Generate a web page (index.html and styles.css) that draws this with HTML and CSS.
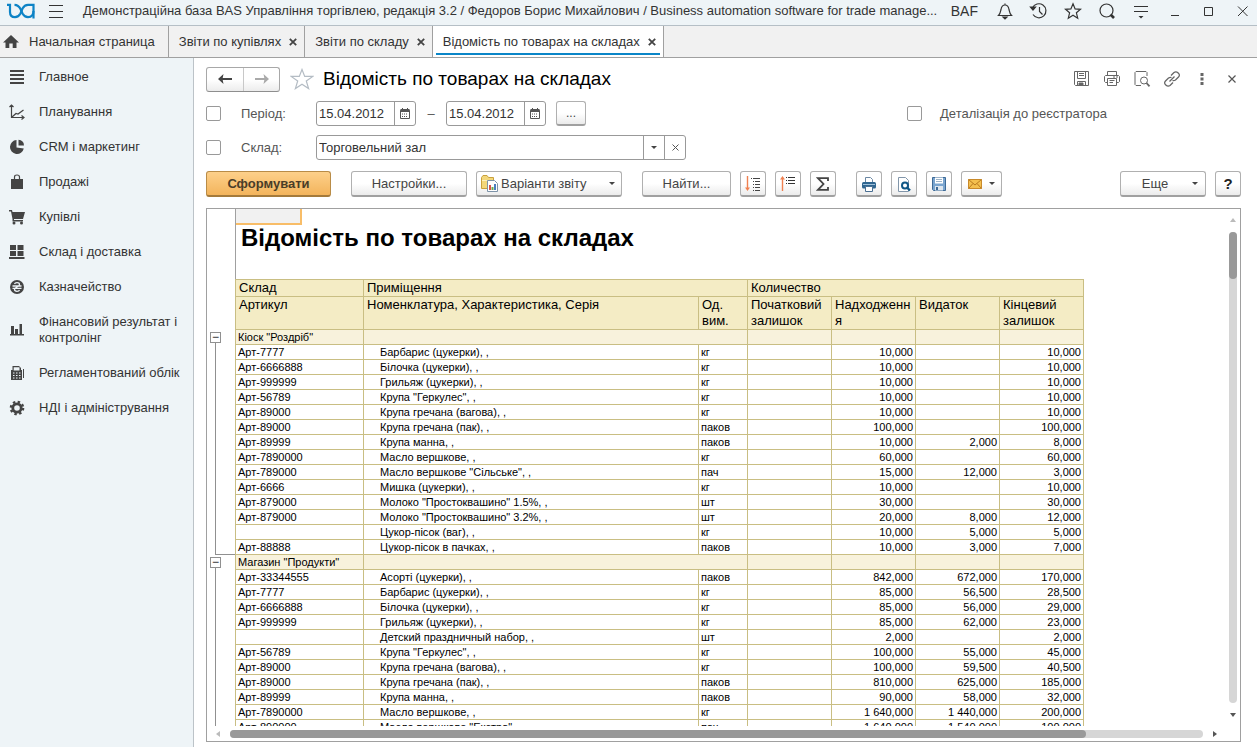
FILE: index.html
```html
<!DOCTYPE html>
<html lang="uk">
<head>
<meta charset="utf-8">
<title>Відомість по товарах на складах</title>
<link rel="stylesheet" href="styles.css">
</head>
<body>
<div class="app">
  <header class="topbar">
    <svg class="logo" width="28" height="16" viewBox="0 0 28 16" fill="none" stroke="#0d83c6" stroke-width="2.200"><path d="M0 1.800H3V9Q3 14.200 8 14.200Q11.500 14.200 13.500 10.500L15.500 5.500Q17.500 1.800 21 1.800H26.500V15.500"/><path d="M7.500 1.800Q11.500 1.800 13.500 6L15.500 10.500Q17.500 14.200 21 14.200Q26.500 14.200 26.500 8"/></svg>
    <button class="icon-btn menu" aria-label="Меню"><svg width="16" height="16" viewBox="0 0 16 16" stroke="#333" fill="none"><path d="M1 2.500H15M1 8.500H15M1 14.500H15"/></svg></button>
    <div class="app-title">Демонстраційна база BAS Управління торгівлею, редакція 3.2 / Федоров Борис Михайлович / Business automation software for trade manage...</div>
    <span class="baf">BAF</span>
    <nav class="top-icons">
      <button class="icon-btn" aria-label="Сповіщення"><svg width="20" height="20" viewBox="0 0 20 20" stroke="#333" stroke-width="1.200" fill="none"><path d="M10 2.500V4M3.500 14.500H16.500C14.500 12.500 14.500 10.500 14 8.500C13.500 5.500 12 4 10 4S6.500 5.500 6 8.500C5.500 10.500 5.500 12.500 3.500 14.500Z"/><path d="M8 16H12L10 18Z" fill="#333"/></svg></button>
      <button class="icon-btn" aria-label="Історія"><svg width="20" height="20" viewBox="0 0 20 20" stroke="#333" stroke-width="1.200" fill="none"><path d="M3.500 7A7 7 0 1 1 4 13.500M10.500 6V10.500L13.500 13.500"/><path d="M1.500 6L4 9L6.500 6Z" fill="#333"/></svg></button>
      <button class="icon-btn" aria-label="Обране"><svg width="20" height="20" viewBox="0 0 20 20" stroke="#333" stroke-width="1.200" fill="none"><path d="M10 2.800L12.100 7.900L17.500 8.300L13.400 11.800L14.700 17.200L10 14.300L5.300 17.200L6.600 11.800L2.500 8.300L7.900 7.900Z"/></svg></button>
      <button class="icon-btn" aria-label="Пошук"><svg width="20" height="20" viewBox="0 0 20 20" stroke="#333" stroke-width="1.200" fill="none"><circle cx="9.500" cy="9.500" r="6.500"/><path d="M13.500 13.500L17 17" stroke-width="2.600"/></svg></button>
      <button class="icon-btn" aria-label="Налаштування"><svg width="20" height="20" viewBox="0 0 20 20" stroke="#333" stroke-width="1.200" fill="none"><path d="M3 5.500H17M3 10.500H17"/><path d="M7.500 15H12.500L10 17.500Z" fill="#333" stroke="none"/></svg></button>
      <button class="icon-btn" aria-label="Згорнути"><svg width="20" height="20" viewBox="0 0 20 20" stroke="#333" fill="none"><path d="M6 14.500H14"/></svg></button>
      <button class="icon-btn" aria-label="Розгорнути"><svg width="20" height="20" viewBox="0 0 20 20" stroke="#333" fill="none"><path d="M5.500 6.500H13.500V14.500H5.500Z"/></svg></button>
      <button class="icon-btn" aria-label="Закрити"><svg width="20" height="20" viewBox="0 0 20 20" stroke="#333" fill="none"><path d="M5 5.500L14.500 15M14.500 5.500L5 15"/></svg></button>
    </nav>
  </header>

  <nav class="tabs">
    <button class="tab home"><svg width="16" height="14" viewBox="0 0 16 14" fill="#444"><path d="M8 0L16 7.500H13.500V13H9.700V8.500H6.300V13H2.500V7.500H0Z"/></svg>Начальная страница</button>
    <button class="tab">Звіти по купівлях<svg class="tab-x" width="8" height="8" viewBox="0 0 8 8"><path d="M.8.8L7.200 7.200M7.200.8L.8 7.200"/></svg></button>
    <button class="tab">Звіти по складу<svg class="tab-x" width="8" height="8" viewBox="0 0 8 8"><path d="M.8.8L7.200 7.200M7.200.8L.8 7.200"/></svg></button>
    <button class="tab active">Відомість по товарах на складах<svg class="tab-x" width="8" height="8" viewBox="0 0 8 8"><path d="M.8.8L7.200 7.200M7.200.8L.8 7.200"/></svg></button>
  </nav>

  <div class="body">
    <aside class="sidebar">
      <a class="side-item" href="#"><svg width="16" height="16" viewBox="0 0 16 16" stroke="#444" stroke-width="2"><path d="M1 2H15M1 6H15M1 10H15M1 14H15"/></svg><span>Главное</span></a>
      <a class="side-item" href="#"><svg width="16" height="16" viewBox="0 0 16 16" stroke="#444" stroke-width="1.200" fill="none"><path d="M2.500 1V13.500H15M.5 3L2.500 1L4.500 3M12.500 11.500L15 13.500L12.500 15.500M3 13L7 9.500L9 10L14.500 6"/></svg><span>Планування</span></a>
      <a class="side-item" href="#"><svg width="16" height="16" viewBox="0 0 16 16" fill="#444"><path d="M7.500 1A7 7 0 1 0 14.800 9.500L7.500 8.500Z"/><path d="M9.500.8V6.500H15A6 6 0 0 0 9.500.8Z"/></svg><span>CRM і маркетинг</span></a>
      <a class="side-item" href="#"><svg width="16" height="16" viewBox="0 0 16 16" fill="#444"><path d="M2 5H14V15H2Z"/><path d="M5.500 7V3Q5.500 1 8 1T10.500 3V7" fill="none" stroke="#444" stroke-width="1.200"/></svg><span>Продажі</span></a>
      <a class="side-item" href="#"><svg width="16" height="16" viewBox="0 0 16 16" fill="#444"><path d="M0 1H3L3.500 3H16L14 10H5V11H14V12.500H3.500V10L2 2.500H0Z"/><circle cx="5" cy="14" r="1.500"/><circle cx="12.500" cy="14" r="1.500"/></svg><span>Купівлі</span></a>
      <a class="side-item" href="#"><svg width="16" height="16" viewBox="0 0 16 16" fill="#444"><path d="M1 1H7V6H1ZM8.500 1H14.500V6H8.500ZM1 7H7V12H1ZM8.500 7H14.500V12H8.500ZM0 13H15.500V15H0Z"/></svg><span>Склад і доставка</span></a>
      <a class="side-item" href="#"><svg width="16" height="16" viewBox="0 0 16 16" fill="none" stroke="#eef4f7" stroke-width="1.300"><circle cx="8" cy="8" r="7" fill="#444" stroke="none"/><path d="M5.500 5Q6 3.700 8 3.700Q10.500 3.700 10.500 5.500Q10.500 7 8 8Q5.500 9 5.500 10.500Q5.500 12.300 8 12.300Q10 12.300 10.500 11M3.500 7H12.500M3.500 9.300H12.500"/></svg><span>Казначейство</span></a>
      <a class="side-item" href="#"><svg width="16" height="16" viewBox="0 0 16 16" fill="#444"><path d="M2 4H5V12H2ZM6 7H9V12H6ZM10.500 2H13V12H10.500ZM1 12H15V13.500H1Z"/></svg><span>Фінансовий результат і контролінг</span></a>
      <a class="side-item" href="#"><svg width="16" height="16" viewBox="0 0 16 16" fill="#444"><path d="M3.500 1H10L12 3V5H13V15H2V5H3.500ZM4.700 2.200V5.500H10.500V2.200Z" fill-rule="evenodd"/><path d="M14 4H15V13H14Z"/><path d="M4 8H11.500M4 10.500H11.500M4 13H11.500" stroke="#eef4f7" stroke-width="1.200" stroke-dasharray="1.500 1.500"/></svg><span>Регламентований облік</span></a>
      <a class="side-item" href="#"><svg width="16" height="16" viewBox="0 0 16 16" fill="none" stroke="#444"><circle cx="8" cy="8" r="4.200" stroke-width="2.800"/><circle cx="8" cy="8" r="6.200" stroke-width="2.200" stroke-dasharray="2.430 2.430"/></svg><span>НДІ і адміністрування</span></a>
    </aside>

    <main class="content">
      <div class="head-row">
        <div class="nav-pair">
          <button class="nav-btn" aria-label="Назад"><svg width="14" height="10" viewBox="0 0 14 10" fill="#444"><path d="M0 5L5.500 0L4.700 4H14V6H4.700L5.500 10Z"/></svg></button>
          <button class="nav-btn" aria-label="Вперед"><svg width="14" height="10" viewBox="0 0 14 10" fill="#aaa"><path d="M14 5L8.500 0L9.300 4H0V6H9.300L8.500 10Z"/></svg></button>
        </div>
        <button class="icon-btn fav" aria-label="До обраного"><svg width="24" height="22" viewBox="0 0 24 22" fill="none" stroke="#b4bcc4" stroke-width="1.200"><path d="M12 1.500L14.700 8.400H22.800L16.300 13L18.600 20.600L12 16.200L5.400 20.600L7.700 13L1.200 8.400H9.300Z"/></svg></button>
        <h1 class="page-title">Відомість по товарах на складах</h1>
        <div class="head-icons">
          <button class="icon-btn" aria-label="Зберегти"><svg width="18" height="18" viewBox="0 0 18 18" fill="none" stroke="#666"><path d="M1.500 1.500H15.500V15.500H2.500L1.500 14.500Z"/><path d="M4.500 1.500V8.500H12.500V1.500M6 3.500H11M6 5.500H11M4.500 15.500V11.500H12.500V15.500"/><path d="M6 13H10V15.500H6Z" fill="#666"/></svg></button>
          <button class="icon-btn" aria-label="Друк"><svg width="18" height="18" viewBox="0 0 18 18" fill="none" stroke="#666"><path d="M4.500 5.500V1.500H13.500V5.500M4.500 12.500H2.500L1.500 11.500V6.500L2.500 5.500H15.500L16.500 6.500V11.500L15.500 12.500H13.500M4.500 8.500H13.500V15.500H4.500ZM6.500 10.500H11.500M6.500 12.500H10M10 7H12M13 7H15"/></svg></button>
          <button class="icon-btn" aria-label="Перегляд"><svg width="18" height="18" viewBox="0 0 18 18" fill="none" stroke="#666"><path d="M8 15.500H3L2 14.500V2.500L3 1.500H13L14 2.500V6"/><circle cx="11" cy="10.500" r="3.500"/><path d="M13.500 13L16.500 16.300" stroke-width="1.800"/></svg></button>
          <button class="icon-btn" aria-label="Посилання"><svg width="18" height="18" viewBox="0 0 18 18" fill="none" stroke="#666" stroke-width="1.300"><path d="M8 5.500L11 2.500Q13 1 15.200 3T15.500 7L12.500 10Q11 11 9.500 10.500M10 12.500L7 15.500Q5 17 2.800 15T2.500 11L5.500 8Q7 7 8.500 7.500M6.500 11.500L11.500 6.500"/></svg></button>
          <button class="icon-btn" aria-label="Ще"><svg width="18" height="18" viewBox="0 0 18 18" fill="#666"><path d="M7.500 3H10.500V6H7.500ZM7.500 7.500H10.500V10.500H7.500ZM7.500 12H10.500V15H7.500Z"/></svg></button>
          <button class="icon-btn" aria-label="Закрити"><svg width="18" height="18" viewBox="0 0 18 18" stroke="#555" stroke-width="1.200"><path d="M5.500 5.500L12.500 12.500M12.500 5.500L5.500 12.500"/></svg></button>
        </div>
      </div>

      <div class="filter-row">
        <input class="check" type="checkbox" id="use-period">
        <label class="filter-label" for="use-period">Період:</label>
        <div class="field date">
          <input type="text" value="15.04.2012" aria-label="Початок періоду">
          <button aria-label="Календар"><svg width="10" height="11" viewBox="0 0 10 11"><path d="M.5 2.500H9.500V10.500H.5Z" fill="none" stroke="#555"/><path d="M.5 1H9.500V4H.5ZM2 0H3V2H2ZM7 0H8V2H7Z" fill="#555"/><path d="M2 6H8M2 8.500H8" stroke="#555" stroke-dasharray="1 1"/></svg></button>
        </div>
        <span class="dash">–</span>
        <div class="field date">
          <input type="text" value="15.04.2012" aria-label="Кінець періоду">
          <button aria-label="Календар"><svg width="10" height="11" viewBox="0 0 10 11"><path d="M.5 2.500H9.500V10.500H.5Z" fill="none" stroke="#555"/><path d="M.5 1H9.500V4H.5ZM2 0H3V2H2ZM7 0H8V2H7Z" fill="#555"/><path d="M2 6H8M2 8.500H8" stroke="#555" stroke-dasharray="1 1"/></svg></button>
        </div>
        <button class="btn dots">...</button>
        <div class="detail">
          <input class="check" type="checkbox" id="detail">
          <label for="detail">Деталізація до реєстратора</label>
        </div>
      </div>

      <div class="filter-row">
        <input class="check" type="checkbox" id="use-store">
        <label class="filter-label" for="use-store">Склад:</label>
        <div class="field store">
          <input type="text" value="Торговельний зал" aria-label="Склад">
          <button aria-label="Вибрати"><span class="caret"></span></button>
          <button aria-label="Очистити"><svg width="7" height="7" viewBox="0 0 7 7" stroke="#555"><path d="M.5.5L6.500 6.500M6.500.5L.5 6.500"/></svg></button>
        </div>
      </div>

      <div class="toolbar">
        <div class="group"><button class="btn primary">Сформувати</button></div>
        <div class="group">
          <button class="btn settings">Настройки...</button>
          <button class="btn variants"><svg width="18" height="17" viewBox="0 0 18 17"><path d="M.5 2.500L2 .5H6L7.500 2.500H12.500V13.500H.5Z" fill="#f3d77a" stroke="#c9a03c"/><path d="M1 5.500H12" stroke="#fff2bf"/><path d="M6.500 5.500H13.500L16.500 8.500V16.500H6.500Z" fill="#fff" stroke="#7d93a8"/><path d="M8 10H10V15H8Z" fill="#d9534a"/><path d="M10.500 12H12.500V15H10.500Z" fill="#6aa84f"/><path d="M13 9H15V15H13Z" fill="#4a7fc0"/></svg><span>Варіанти звіту</span><span class="caret"></span></button>
        </div>
        <div class="group">
          <button class="btn find">Найти...</button>
          <button class="btn sq" aria-label="Розгорнути групи"><svg width="18" height="18" viewBox="0 0 18 18" fill="none"><path d="M3.500 1V14" stroke="#f08050" stroke-width="1.400"/><path d="M1 12.500H6L3.500 16Z" fill="#f08050"/><path d="M7 3.500H8M9 3.500H16M9 6.500H10M11 6.500H16M9 9.500H10M11 9.500H16M9 12.500H10M11 12.500H16M9 15.500H10M11 15.500H16" stroke="#444"/></svg></button>
          <button class="btn sq" aria-label="Згорнути групи"><svg width="18" height="18" viewBox="0 0 18 18" fill="none"><path d="M3.500 4V16" stroke="#f08050" stroke-width="1.400"/><path d="M1 4.500H6L3.500 1Z" fill="#f08050"/><path d="M7 2.500H8M9 2.500H16M7 5.500H8M9 5.500H16M7 8.500H8M9 8.500H16" stroke="#333"/></svg></button>
          <button class="btn sq" aria-label="Сума"><svg width="14" height="14" viewBox="0 0 14 14" fill="none" stroke="#444" stroke-width="1.800"><path d="M12 4V1.200H2L7.500 7L2 12.800H12V10" /></svg></button>
        </div>
        <div class="group">
          <button class="btn sq" aria-label="Друк"><svg width="16" height="16" viewBox="0 0 16 16"><path d="M4.500 7V1.500H9.500L11.500 3.500V7" fill="#fff" stroke="#6b87a3"/><rect x="1" y="6" width="14" height="6.500" rx="1.500" fill="#2f6690"/><path d="M2 8.500H14" stroke="#9fc0da"/><path d="M4.500 10.500H11.500V15.500H4.500Z" fill="#fff" stroke="#4a6f92"/></svg></button>
          <button class="btn sq" aria-label="Попередній перегляд"><svg width="16" height="16" viewBox="0 0 16 16"><path d="M2.500 1.500H9.500L12.500 4.500V15.500H2.500Z" fill="#fff" stroke="#8296aa"/><circle cx="9" cy="9.500" r="3" fill="#fff" stroke="#0f5685" stroke-width="2"/><path d="M11 11.500L14 14.500" stroke="#0f5685" stroke-width="2.400"/></svg></button>
          <button class="btn sq" aria-label="Зберегти"><svg width="16" height="16" viewBox="0 0 16 16"><path d="M1.500 1.500H14.500V14.500H2.500L1.500 13.500Z" fill="#7aa5cf" stroke="#3d6a97"/><path d="M4 1.500H12V7.500H4Z" fill="#fff"/><path d="M5 3.500H11M5 5.500H11" stroke="#9db4c8"/><path d="M4 10H12V14.500H4Z" fill="#dde6ee"/><path d="M5 11H7V14H5Z" fill="#3d6a97"/></svg></button>
          <button class="btn mail" aria-label="Надіслати"><svg width="14" height="10" viewBox="0 0 14 10"><path d="M.5.5H13.500V9.500H.5Z" fill="#f4c04f" stroke="#c98a2b"/><path d="M.5.5L7 6L13.500.5M.5 9.500L5 4.500M13.500 9.500L9 4.500" fill="none" stroke="#b87a20"/></svg><span class="caret"></span></button>
        </div>
        <div class="group end">
          <button class="btn more"><span>Еще</span><span class="caret"></span></button>
          <button class="btn sq help">?</button>
        </div>
      </div>

      <section class="report">
        <div class="sheet">
          <div class="rail">
            <div class="branch first"><button class="toggle" aria-label="Згорнути">−</button><div class="line"></div></div>
            <div class="branch"><button class="toggle" aria-label="Згорнути">−</button><div class="line"></div></div>
          </div>
          <div class="page">
            <div class="cursor-cell"></div>
            <h2 class="report-title">Відомість по товарах на складах</h2>
            <table class="grid">
              <colgroup><col class="c-art"><col class="c-name"><col class="c-unit"><col class="c-num"><col class="c-num"><col class="c-num"><col class="c-num"></colgroup>
              <thead>
                <tr><th>Склад</th><th colspan="2">Приміщення</th><th colspan="4">Количество</th></tr>
                <tr class="tall"><th>Артикул</th><th>Номенклатура, Характеристика, Серія</th><th>Од. вим.</th><th>Початковий залишок</th><th>Надходження</th><th>Видаток</th><th>Кінцевий залишок</th></tr>
              </thead>
              <tbody>
                <tr class="grp"><td>Кіоск "Роздріб"</td><td colspan="2"></td><td></td><td></td><td></td><td></td></tr>
                <tr><td>Арт-7777</td><td>Барбарис (цукерки), ,</td><td>кг</td><td></td><td>10,000</td><td></td><td>10,000</td></tr>
                <tr><td>Арт-6666888</td><td>Білочка (цукерки), ,</td><td>кг</td><td></td><td>10,000</td><td></td><td>10,000</td></tr>
                <tr><td>Арт-999999</td><td>Грильяж (цукерки), ,</td><td>кг</td><td></td><td>10,000</td><td></td><td>10,000</td></tr>
                <tr><td>Арт-56789</td><td>Крупа "Геркулес", ,</td><td>кг</td><td></td><td>10,000</td><td></td><td>10,000</td></tr>
                <tr><td>Арт-89000</td><td>Крупа гречана (вагова), ,</td><td>кг</td><td></td><td>10,000</td><td></td><td>10,000</td></tr>
                <tr><td>Арт-89000</td><td>Крупа гречана (пак), ,</td><td>паков</td><td></td><td>100,000</td><td></td><td>100,000</td></tr>
                <tr><td>Арт-89999</td><td>Крупа манна, ,</td><td>паков</td><td></td><td>10,000</td><td>2,000</td><td>8,000</td></tr>
                <tr><td>Арт-7890000</td><td>Масло вершкове, ,</td><td>кг</td><td></td><td>60,000</td><td></td><td>60,000</td></tr>
                <tr><td>Арт-789000</td><td>Масло вершкове "Сільське", ,</td><td>пач</td><td></td><td>15,000</td><td>12,000</td><td>3,000</td></tr>
                <tr><td>Арт-6666</td><td>Мишка (цукерки), ,</td><td>кг</td><td></td><td>10,000</td><td></td><td>10,000</td></tr>
                <tr><td>Арт-879000</td><td>Молоко "Простоквашино" 1.5%, ,</td><td>шт</td><td></td><td>30,000</td><td></td><td>30,000</td></tr>
                <tr><td>Арт-879000</td><td>Молоко "Простоквашино" 3.2%, ,</td><td>шт</td><td></td><td>20,000</td><td>8,000</td><td>12,000</td></tr>
                <tr><td></td><td>Цукор-пісок (ваг), ,</td><td>кг</td><td></td><td>10,000</td><td>5,000</td><td>5,000</td></tr>
                <tr><td>Арт-88888</td><td>Цукор-пісок в пачках, ,</td><td>паков</td><td></td><td>10,000</td><td>3,000</td><td>7,000</td></tr>
                <tr class="grp"><td>Магазин "Продукти"</td><td colspan="2"></td><td></td><td></td><td></td><td></td></tr>
                <tr><td>Арт-33344555</td><td>Асорті (цукерки), ,</td><td>паков</td><td></td><td>842,000</td><td>672,000</td><td>170,000</td></tr>
                <tr><td>Арт-7777</td><td>Барбарис (цукерки), ,</td><td>кг</td><td></td><td>85,000</td><td>56,500</td><td>28,500</td></tr>
                <tr><td>Арт-6666888</td><td>Білочка (цукерки), ,</td><td>кг</td><td></td><td>85,000</td><td>56,000</td><td>29,000</td></tr>
                <tr><td>Арт-999999</td><td>Грильяж (цукерки), ,</td><td>кг</td><td></td><td>85,000</td><td>62,000</td><td>23,000</td></tr>
                <tr><td></td><td>Детский праздничный набор, ,</td><td>шт</td><td></td><td>2,000</td><td></td><td>2,000</td></tr>
                <tr><td>Арт-56789</td><td>Крупа "Геркулес", ,</td><td>кг</td><td></td><td>100,000</td><td>55,000</td><td>45,000</td></tr>
                <tr><td>Арт-89000</td><td>Крупа гречана (вагова), ,</td><td>кг</td><td></td><td>100,000</td><td>59,500</td><td>40,500</td></tr>
                <tr><td>Арт-89000</td><td>Крупа гречана (пак), ,</td><td>паков</td><td></td><td>810,000</td><td>625,000</td><td>185,000</td></tr>
                <tr><td>Арт-89999</td><td>Крупа манна, ,</td><td>паков</td><td></td><td>90,000</td><td>58,000</td><td>32,000</td></tr>
                <tr><td>Арт-7890000</td><td>Масло вершкове, ,</td><td>кг</td><td></td><td>1 640,000</td><td>1 440,000</td><td>200,000</td></tr>
                <tr><td>Арт-890000</td><td>Масло вершкове "Екстра", ,</td><td>пач</td><td></td><td>1 640,000</td><td>1 540,000</td><td>100,000</td></tr>
              </tbody>
            </table>
          </div>
          <div class="vscroll"><span class="arrow up"></span><div class="track"><div class="thumb"></div></div><span class="arrow down"></span></div>
        </div>
        <div class="hscroll"><span class="arrow left"></span><div class="track"><div class="thumb"></div></div><span class="arrow right"></span></div>
      </section>
    </main>
  </div>
</div>
</body>
</html>
```
FILE: styles.css
```css
* { box-sizing: border-box; }
body { margin: 0; font: 13px/16px "Liberation Sans", Arial, sans-serif; color: #333; background: #fff; }
button, input { font: inherit; color: inherit; margin: 0; }
button { padding: 0; border: 0; background: none; display: flex; align-items: center; justify-content: center; }
svg { display: block; flex: none; }

.app { height: 100vh; display: flex; flex-direction: column; overflow: hidden; }

.topbar { flex: none; display: flex; align-items: center; height: 26px; padding: 0 4px 4px 7px; background: #eef4f7; border-bottom: 1px solid #b5bfc6; }
.menu { margin-left: 13px; }
.app-title { flex: 1; min-width: 0; margin-left: 19px; white-space: nowrap; }
.baf { margin-right: 17px; font-size: 14px; }
.top-icons { display: flex; gap: 14px; }

.tabs { flex: none; display: flex; height: 32px; background: #f1f1f1; border-bottom: 1px solid #a0a0a0; }
.tab { position: relative; gap: 8px; padding: 0 7px 0 10px; border-right: 1px solid #a0a0a0; }
.tab.home { gap: 10px; padding: 0 13px 0 3px; }
.tab.active { background: #fff; }
.tab.active::after { content: ""; position: absolute; left: 3px; right: 3px; bottom: 2px; height: 2px; background: #0a86c8; }
.tab-x { stroke: #444; stroke-width: 1.8; }

.body { flex: 1; min-height: 0; display: flex; }
.sidebar { flex: none; width: 194px; background: #eef4f7; border-right: 1px solid #bcc3c8; }
.side-item { display: flex; align-items: center; gap: 14px; min-height: 35px; padding: 11px 12px 8px 9px; color: inherit; text-decoration: none; }

.content { flex: 1; min-width: 0; display: flex; flex-direction: column; padding: 8px 16px 5px 12px; }

.head-row { flex: none; display: flex; align-items: center; height: 26px; }
.nav-pair { display: flex; height: 25px; border: 1px solid #a8a8a8; border-bottom-color: #8e8e8e; border-radius: 3px; background: linear-gradient(#fff 50%, #ececec); }
.nav-btn { width: 36px; }
.nav-btn + .nav-btn { border-left: 1px solid #c8c8c8; }
.fav { margin-left: 10px; }
.page-title { margin: 0 0 0 9px; font-size: 19px; line-height: 24px; font-weight: 400; color: #000; }
.head-icons { display: flex; gap: 12px; margin-left: auto; }

.filter-row { flex: none; display: flex; align-items: center; height: 25px; margin-top: 9px; color: #555; }
.check { appearance: none; flex: none; width: 15px; height: 15px; border: 1px solid #999; border-radius: 2px; background: #fff; }
.filter-label { width: 75px; margin-left: 20px; }
.field { display: flex; height: 25px; border: 1px solid #999; border-radius: 3px; background: #fff; color: #333; overflow: hidden; }
.field input { flex: 1; min-width: 0; padding: 0 2px; border: 0; outline: 0; background: transparent; }
.field button { width: 21px; border-left: 1px solid #999; }
.date { width: 100px; }
.dash { width: 30px; text-align: center; }
.dots { width: 30px; margin-left: 10px; }
.detail { display: flex; align-items: center; gap: 18px; margin-left: auto; padding-right: 134px; }
.store { width: 370px; }

.btn { height: 26px; border: 1px solid #b0b0b0; border-bottom: 2px solid #a0a0a0; border-radius: 3px; background: linear-gradient(#fff 50%, #ebebeb); color: #444; white-space: nowrap; }
.dots { height: 25px; font-size: 12px; }
.caret { width: 0; height: 0; border: 3px solid transparent; border-top-color: #444; border-bottom: 0; }

.toolbar { flex: none; display: flex; gap: 20px; margin-top: 11px; }
.group { display: flex; gap: 9px; }
.end { margin-left: auto; }
.primary { width: 125px; font-weight: 700; color: #4a3d28; border-color: #b98c47; border-bottom-color: #a47a3b; background: linear-gradient(#fdd08a, #f3b45c); }
.settings { width: 116px; }
.variants { width: 146px; padding: 0 6px 0 4px; gap: 2px; }
.variants .caret { margin-left: auto; }
.find { width: 89px; }
.sq { width: 26px; }
.mail { width: 41px; gap: 7px; }
.more { width: 86px; gap: 24px; padding: 0 6px 0 20px; }
.help { font-size: 15px; font-weight: 700; color: #222; }

.report { flex: 1; min-height: 0; display: flex; flex-direction: column; margin-top: 11px; border: 1px solid #a0a0a0; }
.sheet { flex: 1; min-height: 0; display: flex; overflow: hidden; }
.rail { flex: none; width: 28px; padding-top: 123px; }
.branch { display: flex; flex-direction: column; height: 225px; padding-left: 3px; }
.toggle { flex: none; width: 11px; height: 11px; border: 1px solid #909090; background: #fff; font-size: 12px; line-height: 9px; color: #222; }
.line { flex: 1; margin: 0 0 3px 5px; border-left: 1px solid #909090; }
.first .line { border-bottom: 1px solid #909090; margin-bottom: 2px; }
.page { flex: 1; min-width: 0; border-left: 1px solid #a0a0a0; color: #000; }
.cursor-cell { width: 66px; height: 16px; background: #f1f1f1; border-right: 2px solid #f8bd68; border-bottom: 2px solid #f8bd68; }
.report-title { margin: 0; padding-left: 5px; height: 54px; font-size: 24px; line-height: 26px; font-weight: 700; }

.grid { width: 849px; margin-left: -1px; table-layout: fixed; border-collapse: collapse; font-size: 11px; line-height: 14px; }
.c-art { width: 128px; }
.c-name { width: 335px; }
.c-unit { width: 49px; }
.c-num { width: 84px; }
.grid th, .grid td { border: 1px solid #c9be83; padding: 0 2px; white-space: nowrap; }
.grid th { height: 17px; padding: 0 3px; background: #f4ecc5; font-size: 13px; line-height: 16px; font-weight: 400; text-align: left; vertical-align: top; white-space: normal; overflow-wrap: anywhere; }
.grid .tall th { height: 33px; }
.grid td { height: 15px; }
.grid td:nth-child(2) { padding-left: 16px; }
.grid td:nth-child(n+4) { text-align: right; }
.grid .grp td { background: #f8f2dc; }

.track { flex: 1; background: #d6d6d6; border-radius: 4px; }
.thumb { background: #999; border-radius: 4px; }
.arrow { width: 0; height: 0; border: 3px solid transparent; }
.up { border-bottom: 4px solid #bbb; border-top: 0; }
.down { border-top: 4px solid #555; border-bottom: 0; }
.left { border-right: 4px solid #bbb; border-left: 0; }
.right { border-left: 4px solid #555; border-right: 0; }
.vscroll { flex: none; display: flex; flex-direction: column; align-items: center; gap: 10px; width: 8px; margin-right: 3px; padding: 9px 0 9px; }
.vscroll .track { width: 8px; }
.vscroll .thumb { height: 10%; }
.hscroll { flex: none; display: flex; align-items: center; gap: 10px; height: 15px; padding: 0 23px 0 9px; }
.hscroll .track { height: 8px; }
.hscroll .thumb { width: 88%; height: 8px; }
```
